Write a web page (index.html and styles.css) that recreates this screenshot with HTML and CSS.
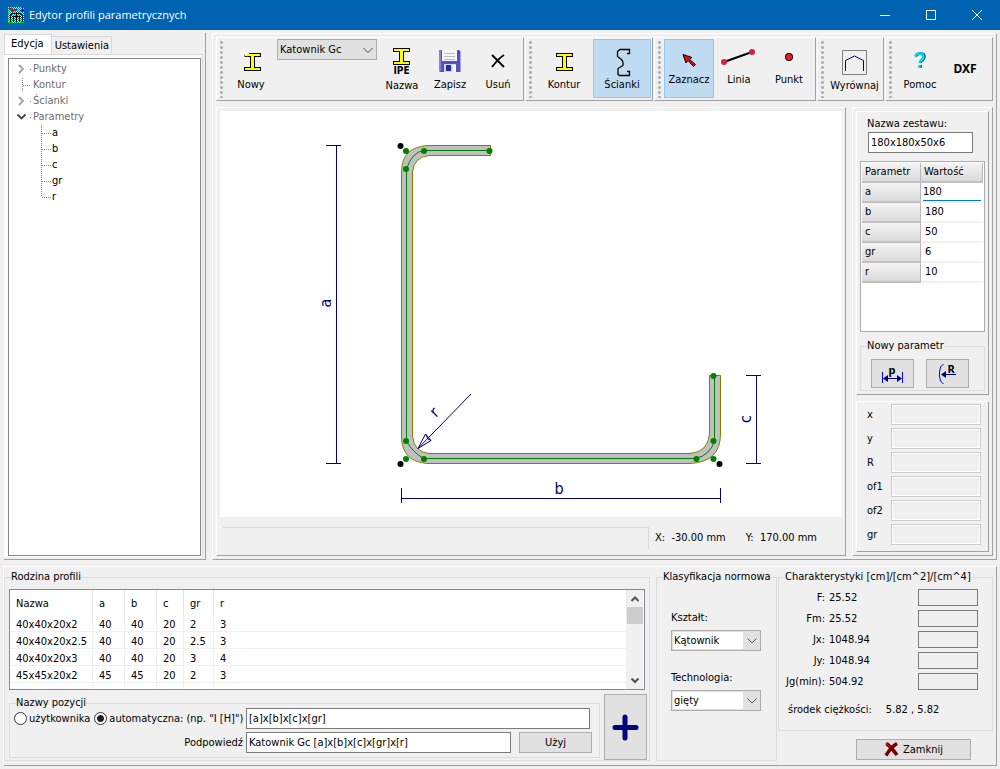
FILE: index.html
```html
<!DOCTYPE html>
<html lang="pl">
<head>
<meta charset="utf-8">
<title>Edytor profili parametrycznych</title>
<link rel="stylesheet" href="styles.css">
</head>
<body>
<header class="titlebar">
  <svg class="app-icon" width="16" height="16" viewBox="0 0 16 16" shape-rendering="crispEdges">
    <defs><pattern id="mesh" width="2" height="2" patternUnits="userSpaceOnUse"><rect width="2" height="2" fill="#008888"/><rect width="1" height="1" fill="#d0d0d0"/><rect x="1" y="1" width="1" height="1" fill="#d0d0d0"/></pattern></defs>
    <rect width="16" height="16" fill="url(#mesh)"/>
    <path d="M1 1.500h3M1 2.500h8M3 3.500h5M4 4.500h2" stroke="#f00"/>
    <path d="M14.500 0v5M12 3.500h4" stroke="#00f"/>
    <path d="M2.500 15V8M3 6.500h10M2 7.500h2M12 7.500h2M14.500 15V8M5.500 15V9M8.500 15V5M11.500 15V9M4 9.500h9" fill="none" stroke="#000"/>
    <path d="M0 15.500h5M12 15.500h4" stroke="#0d0"/>
  </svg>
  <h1>Edytor profili parametrycznych</h1>
  <div class="window-controls">
    <button type="button" aria-label="Minimalizuj"><svg width="12" height="12"><path d="M1 6.500h10" stroke="#fff"/></svg></button>
    <button type="button" aria-label="Maksymalizuj"><svg width="12" height="12"><path d="M1.500 1.500h9v9h-9z" fill="none" stroke="#fff"/></svg></button>
    <button type="button" aria-label="Zamknij okno"><svg width="12" height="12"><path d="M1 1l10 10M11 1L1 11" stroke="#fff"/></svg></button>
  </div>
</header>

<main class="workspace">
  <aside class="tree-panel">
    <div class="tabs" role="tablist">
      <button type="button" role="tab" class="tab active" aria-selected="true">Edycja</button>
      <button type="button" role="tab" class="tab" aria-selected="false">Ustawienia</button>
    </div>
    <div class="tab-page">
      <ul class="tree">
        <li><svg width="24" height="16"><path d="M10 4l4 4-4 4" fill="none" stroke="#a0a0a0" stroke-width="1.800"/><path d="M21 8.500h1" stroke="#808080"/></svg>Punkty</li>
        <li><svg width="24" height="16"><path d="M13.500 1v14M14 8.500h8" stroke="#808080" stroke-dasharray="1 1"/></svg>Kontur</li>
        <li><svg width="24" height="16"><path d="M10 4l4 4-4 4" fill="none" stroke="#a0a0a0" stroke-width="1.800"/><path d="M21 8.500h1" stroke="#808080"/></svg>Ścianki</li>
        <li><svg width="24" height="16"><path d="M8.500 5.500l4 4 4-4" fill="none" stroke="#404040" stroke-width="1.800"/><path d="M21 8.500h1" stroke="#808080"/></svg>Parametry
          <ul>
            <li><svg width="43" height="16"><path d="M32.500 0v16M33 8.500h9" stroke="#808080" stroke-dasharray="1 1"/></svg>a</li>
            <li><svg width="43" height="16"><path d="M32.500 0v16M33 8.500h9" stroke="#808080" stroke-dasharray="1 1"/></svg>b</li>
            <li><svg width="43" height="16"><path d="M32.500 0v16M33 8.500h9" stroke="#808080" stroke-dasharray="1 1"/></svg>c</li>
            <li><svg width="43" height="16"><path d="M32.500 0v16M33 8.500h9" stroke="#808080" stroke-dasharray="1 1"/></svg>gr</li>
            <li><svg width="43" height="16"><path d="M32.500 0v8M33 8.500h9" stroke="#808080" stroke-dasharray="1 1"/></svg>r</li>
          </ul>
        </li>
      </ul>
    </div>
  </aside>

  <section class="editor">
    <nav class="toolbar">
      <div class="tool-group">
        <button type="button" class="tool mid"><svg width="46" height="37" viewBox="228 40 46 37"><path d="M244.500 53.500h16v3h-6v11h6v3h-16v-3h6v-11h-6z" fill="#ff0" stroke="#000" shape-rendering="crispEdges"/><path d="M244 48v10M239 53.500h10M241 50.500l6 6M247 50.500l-6 6" stroke="#fff"/></svg>Nowy</button>
        <div class="dropdown profile-kind"><select aria-label="Typ profilu"><option>Katownik Gc</option></select><svg width="18" height="20"><path d="M4.500 8l4.500 4.500L13.500 8" fill="none" stroke="#505050"/></svg></div>
        <button type="button" class="tool"><svg width="46" height="38" viewBox="379 40 46 38"><path d="M393.500 48.500h16v3h-6v10h6v3h-16v-3h6v-10h-6z" fill="#ff0" stroke="#000" shape-rendering="crispEdges"/><text x="401.500" y="74" text-anchor="middle" class="ipe">IPE</text></svg>Nazwa</button>
        <button type="button" class="tool"><svg width="46" height="37" viewBox="427 40 46 37"><path d="M439 50h20l1.500 1.500V72H440l-1-1z" fill="#5552c4"/><path d="M439 50h2v21h-2z" fill="#8583e0"/><path d="M442 50h15v11h-15z" fill="#f8f8f8"/><path d="M444 53.500h11M444 56.500h11M444 59.500h11" stroke="#b8b8c8"/><path d="M444 64h12v8h-12z" fill="#d0d8ec"/><path d="M446 65h5v6h-5z" fill="#242e9c"/><path d="M453 65h3v7h-3z" fill="#fff"/></svg>Zapisz</button>
        <button type="button" class="tool"><svg width="46" height="37" viewBox="475 40 46 37"><path d="M492 55l12 12M504 55q-5 3-12 12" fill="none" stroke="#000" stroke-width="1.800"/></svg>Usuń</button>
      </div>
      <div class="tool-group">
        <button type="button" class="tool wide"><svg width="46" height="37" viewBox="541 40 46 37"><path d="M556.500 53.500h16v3h-6v11h6v3h-16v-3h6v-11h-6z" fill="#ff0" stroke="#000" shape-rendering="crispEdges"/></svg>Kontur</button>
        <button type="button" class="tool wide pressed" aria-pressed="true"><svg width="46" height="37" viewBox="599 40 46 37"><path d="M627 53.500h2.500v-4H620l-2.500 2v5l4 3q1.500 2 1.500 3v3l-5 3v6l1.500 1h10v-4H627" fill="none" stroke="#000" stroke-width="1.300"/></svg>Ścianki</button>
      </div>
      <div class="tool-group">
        <button type="button" class="tool mid pressed" aria-pressed="true"><svg width="46" height="32" viewBox="666 40 46 32"><path d="M683 54.500l9 3-2.500 2 6 5-2 2-5.500-6-2 2.500z" fill="#f00" stroke="#000"/></svg>Zaznacz</button>
        <button type="button" class="tool mid"><svg width="46" height="32" viewBox="716 40 46 32"><path d="M724 62l28-10" stroke="#000" stroke-width="2"/><circle cx="724" cy="62" r="3" fill="#dc1c40"/><circle cx="752" cy="52" r="3" fill="#dc1c40"/></svg>Linia</button>
        <button type="button" class="tool mid"><svg width="46" height="32" viewBox="766 40 46 32"><circle cx="789" cy="57" r="3.700" fill="#ec1c24" stroke="#000"/></svg>Punkt</button>
      </div>
      <div class="tool-group">
        <button type="button" class="tool align"><svg width="47" height="38" viewBox="831 40 47 38"><path d="M842.500 50.500h24v24h-24z" fill="none" stroke="#808080"/><path d="M845.500 71V60.500l9-4.500 9 4.500V71" fill="none" stroke="#000080"/></svg>Wyrównaj</button>
      </div>
      <div class="tool-group">
        <button type="button" class="tool mid"><svg width="46" height="37" viewBox="897 40 46 37"><path d="M915.500 56.500q0-3 4-3t4 3q0 2-2 3.500t-2 3M919.500 65v3" fill="none" stroke="#004060" stroke-width="2.500" transform="translate(1)"/><path d="M915.500 56.500q0-3 4-3t4 3q0 2-2 3.500t-2 3M919.500 65v3" fill="none" stroke="#00d8e8" stroke-width="2.500"/></svg>Pomoc</button>
        <button type="button" class="tool dxf">DXF</button>
      </div>
    </nav>

    <div class="work-row">
      <section class="canvas-panel">
        <svg class="drawing" viewBox="220 111 622 406" role="img" aria-label="Rysunek profilu">
          <path class="steel" d="M490.500 145.500H428Q401.500 147 401.500 172V437Q402 462 428 463.500H690Q720.500 462 720.500 434V375.500H709.500V434Q708 452 690 453.500H429Q414 452 412.500 436V172Q414 157 429 155.500H490.500Z"/>
          <path class="axis" d="M489.500 150.500H424Q412 152 406.500 169V441Q413 453 424 458.500H696Q710 455 714.500 441V375.500"/>
          <g class="node"><circle cx="406" cy="151" r="3"/><circle cx="424" cy="151" r="3"/><circle cx="489.500" cy="151" r="3"/><circle cx="406" cy="169" r="3"/><circle cx="406" cy="441" r="3"/><circle cx="406" cy="459" r="3"/><circle cx="424" cy="459" r="3"/><circle cx="696.500" cy="459" r="3"/><circle cx="713.500" cy="459" r="3"/><circle cx="713.500" cy="441" r="3"/><circle cx="713.500" cy="376" r="3"/></g>
          <g><circle cx="400.500" cy="146" r="3"/><circle cx="400.500" cy="464" r="3"/><circle cx="719.500" cy="464" r="3"/></g>
          <path class="dim" d="M336.500 145.500V463.500M326 145.500h15M326 463.500h15M401.500 498.500H720.500M401.500 488v15M720.500 488v15M756.500 375.500V463.500M746 375.500h15M746 463.500h15M471 394L418 448.500M418 448.500L425.500 434L431 440.500ZM425.500 434l2.500 5 3 1.500"/>
          <g class="dim-label"><text transform="translate(331 303) rotate(-90)">a</text><text x="559" y="494">b</text><text transform="translate(751 419) rotate(-90)">c</text><text transform="translate(438 416) rotate(-45)">r</text></g>
        </svg>
        <div class="status"><div class="message"></div><output>X:&nbsp; -30.00 mm</output><output>Y:&nbsp; 170.00 mm</output></div>
      </section>

      <aside class="side">
        <section class="box set-box">
          <label class="set-label" for="zestaw">Nazwa zestawu:</label>
          <input id="zestaw" class="set-name" value="180x180x50x6">
          <div class="param-grid">
            <table>
              <thead><tr><th>Parametr</th><th>Wartość</th></tr></thead>
              <tbody>
                <tr><th>a</th><td class="editing"><input aria-label="Wartość a" value="180"></td></tr>
                <tr><th>b</th><td>180</td></tr>
                <tr><th>c</th><td>50</td></tr>
                <tr><th>gr</th><td>6</td></tr>
                <tr><th>r</th><td>10</td></tr>
              </tbody>
            </table>
          </div>
          <fieldset class="new-param"><legend>Nowy parametr</legend>
            <button type="button" aria-label="Nowy wymiar"><svg width="24" height="24" viewBox="881 361 24 24"><path d="M882.500 371v11M902.500 371v11" stroke="#00f"/><path d="M884 377.500h17" stroke="#000080"/><path d="M883 377.500l5-3.500v7zM902 377.500l-5-3.500v7z" fill="#000080"/><text x="892" y="373" text-anchor="middle" class="glyph">p</text></svg></button>
            <button type="button" aria-label="Nowy promień"><svg width="24" height="26" viewBox="936 360 24 26"><path d="M943.500 363q-4 2-4 8v4q0 6 4 8" fill="none" stroke="#00f"/><path d="M943 373.500h13" stroke="#000080"/><path d="M941 373.500l5-3.500v7z" fill="#000080"/><text x="951" y="372" text-anchor="middle" class="glyph">R</text></svg></button>
          </fieldset>
        </section>
        <section class="box coords">
          <label for="cx">x</label><input id="cx" disabled>
          <label for="cy">y</label><input id="cy" disabled>
          <label for="cr">R</label><input id="cr" disabled>
          <label for="of1">of1</label><input id="of1" disabled>
          <label for="of2">of2</label><input id="of2" disabled>
          <label for="cgr">gr</label><input id="cgr" disabled>
        </section>
      </aside>
    </div>
  </section>
</main>

<section class="bottom">
  <fieldset class="family"><legend>Rodzina profili</legend>
    <div class="list">
      <table>
        <colgroup><col class="c-name"><col class="c-ab"><col class="c-ab"><col class="c-c"><col class="c-gr"><col></colgroup>
        <thead><tr><th>Nazwa</th><th>a</th><th>b</th><th>c</th><th>gr</th><th>r</th></tr></thead>
        <tbody>
          <tr><td>40x40x20x2</td><td>40</td><td>40</td><td>20</td><td>2</td><td>3</td></tr>
          <tr><td>40x40x20x2.5</td><td>40</td><td>40</td><td>20</td><td>2.5</td><td>3</td></tr>
          <tr><td>40x40x20x3</td><td>40</td><td>40</td><td>20</td><td>3</td><td>4</td></tr>
          <tr><td>45x45x20x2</td><td>45</td><td>45</td><td>20</td><td>2</td><td>3</td></tr>
          <tr class="tail"><td></td><td></td><td></td><td></td><td></td><td></td></tr>
        </tbody>
      </table>
      <div class="scrollbar">
        <svg width="16" height="17"><path d="M4.500 11l3.500-3.500 3.500 3.500" fill="none" stroke="#505050" stroke-width="2"/></svg>
        <div class="thumb"></div>
        <svg class="down" width="16" height="17"><path d="M4.500 6.500L8 10l3.500-3.500" fill="none" stroke="#505050" stroke-width="2"/></svg>
      </div>
    </div>
    <div class="naming-row">
      <fieldset class="naming"><legend>Nazwy pozycji</legend>
        <div class="naming-grid">
          <div class="radios">
            <label><input type="radio" name="nazwy">użytkownika</label>
            <label><input type="radio" name="nazwy" checked>automatyczna: (np. "I [H]")</label>
          </div>
          <input class="pattern" aria-label="Wzór nazwy" value="[a]x[b]x[c]x[gr]">
          <label class="hint-label" for="hint">Podpowiedź</label>
          <input id="hint" value="Katownik Gc [a]x[b]x[c]x[gr]x[r]">
          <button type="button">Użyj</button>
        </div>
      </fieldset>
      <button type="button" class="add" aria-label="Dodaj"><svg width="28" height="28"><path d="M13 4v21M3 14.500h21" stroke="#000080" stroke-width="5" stroke-linecap="round"/></svg></button>
    </div>
  </fieldset>

  <fieldset class="classify"><legend>Klasyfikacja normowa</legend>
    <label for="shape">Kształt:</label>
    <div class="dropdown editable"><select id="shape"><option>Kątownik</option></select><svg width="18" height="19"><path d="M4.500 7.500L9 12l4.500-4.500" fill="none" stroke="#505050"/></svg></div>
    <label for="tech">Technologia:</label>
    <div class="dropdown editable"><select id="tech"><option>gięty</option></select><svg width="18" height="19"><path d="M4.500 7.500L9 12l4.500-4.500" fill="none" stroke="#505050"/></svg></div>
  </fieldset>

  <div class="last">
    <fieldset class="props"><legend>Charakterystyki [cm]/[cm^2]/[cm^4]</legend>
      <div class="prop-grid">
        <label for="pf">F:</label><span>25.52</span><input id="pf" readonly>
        <label for="pfm">Fm:</label><span>25.52</span><input id="pfm" readonly>
        <label for="pjx">Jx:</label><span>1048.94</span><input id="pjx" readonly>
        <label for="pjy">Jy:</label><span>1048.94</span><input id="pjy" readonly>
        <label for="pjg">Jg(min):</label><span>504.92</span><input id="pjg" readonly>
      </div>
      <p class="centroid"><span>środek ciężkości:</span><span>5.82 , 5.82</span></p>
    </fieldset>
    <button type="button" class="close"><svg width="15" height="15"><path d="M2.500 1.500Q7 5 13 13M13 1.500Q7 5 2 13.500" fill="none" stroke="#700" stroke-width="3.500"/><path d="M2 1l4 4" stroke="#d00" stroke-width="1.500"/></svg>Zamknij</button>
  </div>
</section>
</body>
</html>
```

FILE: styles.css
```css
* { box-sizing: border-box; }
html { height: 100%; }
body {
  margin: 0;
  min-height: 100%;
  display: flex;
  flex-direction: column;
  background: #f0f0f0;
  color: #000;
  font: 11px/14px "DejaVu Sans Condensed", Tahoma, "Noto Sans", sans-serif;
}
button, input, select { font: inherit; color: inherit; border-radius: 0; margin: 0; min-width: 0; }
ul { list-style: none; margin: 0; padding: 0; }
svg { display: block; flex: none; overflow: visible; }
table { border-collapse: separate; border-spacing: 0; table-layout: fixed; width: 100%; }
th { font-weight: normal; text-align: left; }
fieldset { --inset: 0px; border: 1px solid #dcdcdc; margin: 0; padding: 0 var(--inset); min-width: 0; }
legend { margin: 0 -12px 0 calc(6px - var(--inset)); padding: 0; line-height: 14px; white-space: nowrap; }

.titlebar { display: flex; align-items: center; height: 30px; padding-left: 8px; gap: 5px; background: #0063b1; color: #fff; }
.titlebar h1 { flex: 1; margin: 0; font: 11px/16px "Open Sans", "Noto Sans", sans-serif; }
.window-controls { display: flex; }
.window-controls button { display: flex; align-items: center; justify-content: center; width: 46px; height: 28px; padding: 0; border: 0; background: none; }

.workspace { flex: 1; display: grid; grid-template-columns: 202px 1fr; gap: 6px; padding: 3px 3px 6px 4px; }
.tree-panel { display: flex; flex-direction: column; border-right: 1px solid #a0a0a0; border-bottom: 1px solid #a0a0a0; padding: 1px 2px 2px 0; }
.tabs { display: flex; align-items: flex-end; height: 20px; }
.tab { height: 18px; padding: 1px 2px 0 3px; border: 1px solid #d9d9d9; border-left: 0; border-bottom: 0; background: #f0f0f0; }
.tab.active { height: 20px; padding: 0 7px 1px 6px; background: #fff; border-left: 1px solid #d9d9d9; }
.tab-page { flex: 1; display: flex; padding: 3px 1px 1px 4px; background: #fcfcfc; border-top: 1px solid #d9d9d9; border-right: 1px solid #d9d9d9; }
.tree { flex: 1; padding-top: 2px; border: 1px solid #828790; background: #fff; }
.tree li { color: #6d6d6d; line-height: 16px; }
.tree li svg { float: left; }
.tree ul li { color: #000; clear: left; }
.tree li + li { clear: left; }

.editor, .canvas-panel, .side, .box, .bottom, .tool-group {
  border: 1px solid #fff;
  border-right-color: #a0a0a0;
  border-bottom-color: #a0a0a0;
}
.editor { display: flex; flex-direction: column; padding: 3px; gap: 6px; min-width: 0; }
.toolbar { display: flex; gap: 1px; }
.tool-group { position: relative; display: flex; padding: 1px 1px 1px 9px; height: 64px; }
.tool-group:last-child { flex: 1; }
.tool-group::before {
  content: "";
  position: absolute;
  left: 3px; top: 2px; bottom: 2px; width: 3px;
  background: radial-gradient(circle, #b0b0b0 1px, transparent 2px) 0 0 / 3px 5px;
}
.tool { display: flex; flex-direction: column; align-items: center; gap: 1px; width: 48px; height: 59px; padding: 0; border: 1px solid transparent; background: none; white-space: nowrap; line-height: 14px; }
.tool.mid { width: 50px; }
.tool.wide { width: 58px; }
.tool.align { width: 55px; }
.tool.pressed { border-color: #90c8f6; background: #c0dcf3; }
.tool.dxf { justify-content: center; width: 40px; font: bold 12px/14px "Noto Sans", sans-serif; }
.ipe { font: bold 10px "DejaVu Sans Condensed", sans-serif; }
.dropdown { display: grid; align-items: center; }
.dropdown select, .dropdown svg { grid-area: 1 / 1; }
.dropdown svg { justify-self: end; pointer-events: none; }
.dropdown select { appearance: none; width: 100%; height: 21px; padding: 0 2px; border: 1px solid #adadad; background: #e1e1e1; }
.profile-kind { width: 100px; height: 21px; margin: 0 1px; }
.dropdown.editable { width: 90px; height: 21px; }
.dropdown.editable select { background: linear-gradient(#fff, #fff) 1px 1px / 70px 17px no-repeat #e1e1e1; }

.work-row { flex: 1; display: grid; grid-template-columns: 1fr 141px; gap: 6px; min-height: 0; }
.canvas-panel { display: flex; flex-direction: column; padding: 3px; }
.drawing { flex: 1; width: 100%; min-height: 0; background: #fff; }
.steel { fill: #c0c0c0; stroke: #808000; }
.axis { fill: none; stroke: #008000; }
.node { fill: #008000; }
.dim { fill: none; stroke: #000080; }
.dim-label { fill: #000080; font: 16px "DejaVu Sans Condensed", sans-serif; text-anchor: middle; }
.status { display: flex; align-items: center; gap: 20px; height: 35px; padding: 6px 25px 0 3px; }
.message { flex: 1; height: 22px; margin-right: -14px; border-top: 1px solid #d7d7d7; border-right: 1px solid #d7d7d7; }

.side { display: flex; flex-direction: column; gap: 6px; padding: 3px; }
.box { padding: 3px; }
.set-box { flex: 1; display: flex; flex-direction: column; }
.set-label { margin: 2px 7px 0; }
.set-name { width: 105px; height: 21px; margin: 1px 0 8px 8px; padding: 0 2px; border: 1px solid #7a7a7a; background: #fff; }
.param-grid { flex: 1; padding: 1px; border: 1px solid #abadb3; background: #fff; }
.param-grid th, .param-grid td { height: 20px; padding: 0 3px; }
.param-grid th { background: linear-gradient(#f4f4f4, #dadada); border-right: 1px solid #b8b8b8; border-bottom: 2px solid #c0c0c0; }
.param-grid th:first-child { width: 59px; }
.param-grid td { padding-left: 4px; border-bottom: 2px solid #f0f0f0; }
.param-grid td.editing { padding: 0 2px; }
.editing input { display: block; width: 100%; height: 17px; padding: 0; border: 0; border-bottom: 1px solid #0078d7; outline: 0; }
.new-param { --inset: 10px; display: flex; gap: 12px; margin-top: 7px; padding-top: 6px; padding-bottom: 2px; }
.new-param button { display: flex; align-items: center; justify-content: center; width: 43px; height: 29px; padding: 0; border: 1px solid #adadad; background: #e1e1e1; }
.glyph { font: bold 11px "Noto Sans", sans-serif; }
.coords { display: grid; grid-template-columns: 21px 1fr; gap: 3px; align-items: center; padding: 2px 7px 6px 10px; }
.coords input { width: 100%; height: 21px; border: 1px solid #ccc; background: #f0f0f0; outline: 1px solid #fff; outline-offset: -2px; }

.bottom { display: grid; grid-template-columns: 1fr 121px 215px; column-gap: 1px; margin: 0 3px 3px; padding: 3px 3px 4px 0; }
.family { --inset: 4px; margin-right: 5px; padding-top: 5px; }
.list { display: flex; height: 101px; padding-right: 1px; border: 1px solid #828790; background: #fff; }
.list table { flex: 1; width: auto; }
.list th, .list td { border-right: 1px solid #f0f0f0; overflow: hidden; white-space: nowrap; }
.list th { height: 25px; padding: 2px 6px 0; border-color: #e5e5e5; }
.list td { height: 17px; padding: 3px 0 0 6px; line-height: 13px; border-bottom: 1px solid #f0f0f0; }
.list .tail td { height: 6px; padding: 0; border-bottom: 0; }
.c-name { width: 83px; }
.c-ab { width: 32px; }
.c-c { width: 27px; }
.c-gr { width: 30px; }
.scrollbar { display: flex; flex-direction: column; width: 16px; background: #f0f0f0; }
.thumb { height: 17px; background: #cdcdcd; }
.scrollbar .down { margin-top: auto; }
.naming-row { display: flex; gap: 4px; margin-top: 4px; }
.naming { flex: 1; margin-top: 2px; align-self: flex-start; padding-bottom: 4px; }
.naming-grid { display: grid; grid-template-columns: 233px 1fr 76px; row-gap: 3px; column-gap: 3px; padding-right: 9px; margin-top: -2px; align-items: center; }
.naming-grid > input { width: 100%; height: 21px; padding: 0 2px; border: 1px solid #7a7a7a; background: #fff; }
.pattern { grid-column: 2 / 4; }
.naming-grid button { height: 21px; padding: 0; margin: 0 -2px 0 5px; border: 1px solid #adadad; background: #e1e1e1; }
.hint-label { text-align: right; }
.radios { display: flex; gap: 4px; padding-left: 4px; white-space: nowrap; }
.radios label { display: flex; align-items: center; gap: 2px; }
.radios input { appearance: none; width: 13px; height: 13px; border: 1px solid #333; border-radius: 50%; background: #fff; }
.radios input:checked { background: radial-gradient(circle, #222 3px, #fff 4px); }
.add { display: flex; align-items: center; justify-content: center; width: 43px; height: 66px; padding: 0; margin-right: -2px; border: 1px solid #adadad; background: #e1e1e1; }

.classify { --inset: 14px; padding-top: 27px; }
.classify label { display: block; margin-bottom: 5px; }
.classify .dropdown { margin-bottom: 20px; }
.last { display: flex; flex-direction: column; }
.props { --inset: 5px; padding: 5px 14px 13px 5px; }
.prop-grid { display: grid; grid-template-columns: 41px 1fr 60px; gap: 4px; align-items: center; white-space: nowrap; }
.prop-grid label { text-align: right; justify-self: end; }
.prop-grid input { width: 60px; height: 17px; border: 1px solid #7a7a7a; background: #f0f0f0; }
.centroid { display: flex; gap: 14px; margin: 13px 0 0 4px; white-space: nowrap; }
.close { display: flex; align-items: center; justify-content: center; gap: 4px; align-self: flex-end; width: 115px; height: 21px; margin: 8px 22px 0 0; padding: 0; border: 1px solid #adadad; background: #e1e1e1; }
```
